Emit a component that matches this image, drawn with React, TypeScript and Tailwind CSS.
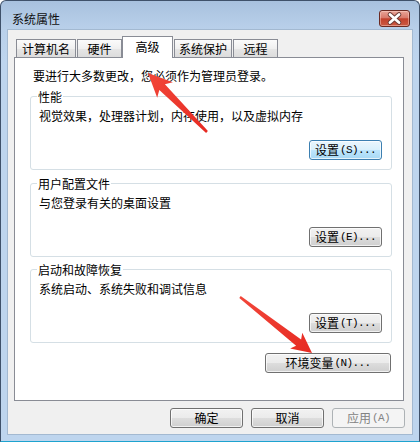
import React from "react";

const mono = "font-['Liberation_Mono',monospace] text-[11px] tracking-[-0.6px]";

const btnNormal =
  "flex h-[20px] items-center justify-center rounded-[3px] border border-[#707070] bg-[linear-gradient(to_bottom,#f2f2f2_0%,#ebebeb_50%,#dddddd_51%,#cfcfcf_100%)] shadow-[inset_0_0_0_1px_rgba(255,255,255,0.7)] text-[12px] leading-[14px] text-black";
const btnFocus =
  "flex h-[20px] items-center justify-center rounded-[3px] border border-[#3c7fb1] bg-[linear-gradient(to_bottom,#eaf6fd_0%,#d9f0fc_50%,#bee6fd_51%,#a7d9f5_100%)] shadow-[inset_0_0_0_1px_rgba(255,255,255,0.7)] text-[12px] leading-[14px] text-black";
const btnDisabled =
  "flex h-[20px] items-center justify-center rounded-[3px] border border-[#adb2b5] bg-[#f4f4f4] text-[12px] leading-[14px] text-[#838383]";

const tabNormal =
  "flex h-[18px] items-center justify-center border-l border-r border-t border-[#898c95] bg-[linear-gradient(to_bottom,#fbfbfb_0%,#f0f0f0_50%,#e6e6e6_51%,#dcdcdc_100%)] text-[12px] leading-[14px]";

function Group({
  label,
  desc,
  btn,
  focus,
  mt,
}: {
  label: string;
  desc: string;
  btn: React.ReactNode;
  focus?: boolean;
  mt: string;
}) {
  return (
    <div className={`${mt} ml-[15px] flex h-[74px] w-[362px] flex-col rounded-[3px] border border-[#d5dfe5]`}>
      <div className="-mt-[7px] ml-[6px] w-fit bg-white px-[1px] leading-[14px]">{label}</div>
      <div className="ml-[8px] mt-[5px] leading-[14px]">{desc}</div>
      <div className={`${focus ? btnFocus : btnNormal} mb-[9px] mr-[9px] mt-auto w-[73px] self-end`}>
        {btn}
      </div>
    </div>
  );
}

export default function App() {
  return (
    <div className="relative h-[442px] w-[420px] bg-white font-['Noto_Sans_CJK_SC',sans-serif] text-[12px] text-black">
      <div className="flex h-[442px] w-[420px] flex-col rounded-t-[6px] border-l border-r border-t border-b border-[#3f516a] border-b-[#1ea3cf] bg-[linear-gradient(to_bottom,#a8c1de_0px,#b9d0ea_28px,#bed5ee_60px,#bed5ee_100%)] px-[6px] pb-[6px]">
        {/* title bar */}
        <div className="flex h-[28px] shrink-0 items-start">
          <div className="ml-[5px] mt-[11px] leading-[14px] text-[#101010]">系统属性</div>
          <div className="ml-auto mr-[3px] mt-[9px] h-[17px] w-[31px] rounded-[3px] border border-[#6b2a22] bg-[linear-gradient(to_bottom,#e8a598_0%,#d97a6b_45%,#c2412d_52%,#cb5a43_100%)] shadow-[inset_0_0_0_1px_rgba(255,220,210,0.45)]">
            <svg width="29" height="15" viewBox="0 0 29 15">
              <path d="M10 3.5 L19 11.5 M19 3.5 L10 11.5" stroke="#6a3a34" strokeWidth="4.6" strokeLinecap="round" />
              <path d="M10 3.5 L19 11.5 M19 3.5 L10 11.5" stroke="#ffffff" strokeWidth="2.8" strokeLinecap="round" />
            </svg>
          </div>
        </div>
        {/* client area */}
        <div className="flex flex-1 flex-col border border-[#a3b9d1] bg-[#f0f0f0] pl-[6px] pt-[6px]">
          {/* tabs */}
          <div className="flex h-[21px] items-end pl-[2px]">
            <div className={`${tabNormal} w-[60px]`}>计算机名</div>
            <div className={`${tabNormal} ml-[1px] w-[45px]`}>硬件</div>
            <div className="relative z-10 -mb-[1px] flex h-[22px] w-[51px] items-start justify-center border-l border-r border-t border-[#898c95] bg-white pt-[3px] text-[12px] leading-[14px]">
              高级
            </div>
            <div className={`${tabNormal} ml-[1px] w-[58px]`}>系统保护</div>
            <div className={`${tabNormal} ml-[1px] w-[45px]`}>远程</div>
          </div>
          {/* panel */}
          <div className="flex h-[344px] w-[390px] flex-col border border-[#898c95] bg-white">
            <div className="ml-[18px] mt-[11px] leading-[14px]">要进行大多数更改，您必须作为管理员登录。</div>
            <Group
              mt="mt-[13px]"
              label="性能"
              desc="视觉效果，处理器计划，内存使用，以及虚拟内存"
              focus
              btn={
                <>
                  设置<span className={`${mono} ml-[1px]`}>(S)...</span>
                </>
              }
            />
            <Group
              mt="mt-[13px]"
              label="用户配置文件"
              desc="与您登录有关的桌面设置"
              btn={
                <>
                  设置<span className={`${mono} ml-[1px]`}>(E)...</span>
                </>
              }
            />
            <Group
              mt="mt-[12px]"
              label="启动和故障恢复"
              desc="系统启动、系统失败和调试信息"
              btn={
                <>
                  设置<span className={`${mono} ml-[1px]`}>(T)...</span>
                </>
              }
            />
            <div className={`${btnNormal} mr-[12px] mt-[10px] w-[126px] self-end`}>
              环境变量<span className={`${mono} ml-[1px]`}>(N)...</span>
            </div>
          </div>
          {/* bottom buttons */}
          <div className="mt-[7px] flex justify-end gap-[8px] pr-[7px]">
            <div className={`${btnNormal} w-[73px]`}>确定</div>
            <div className={`${btnNormal} w-[73px]`}>取消</div>
            <div className={`${btnDisabled} w-[73px]`}>
              应用<span className={`${mono} ml-[1px]`}>(A)</span>
            </div>
          </div>
        </div>
      </div>
      {/* red annotation arrows */}
      <svg className="pointer-events-none absolute left-0 top-0" width="420" height="442" viewBox="0 0 420 442">
        <defs>
          <linearGradient id="ar1" x1="0" y1="0" x2="1" y2="1">
            <stop offset="0" stopColor="#f2473a" />
            <stop offset="1" stopColor="#e62a22" />
          </linearGradient>
        </defs>
        <polygon
          fill="url(#ar1)"
          points="148,73 172.8,82.2 164.9,84.3 207.9,131.1 206.1,132.9 159.3,89.9 157.2,97.8"
        />
        <polygon
          fill="url(#ar1)"
          points="312,353 302.3,332.8 301.1,339.4 240.7,296 239.3,298 296.1,345.8 290.1,348.6"
        />
      </svg>
    </div>
  );
}
